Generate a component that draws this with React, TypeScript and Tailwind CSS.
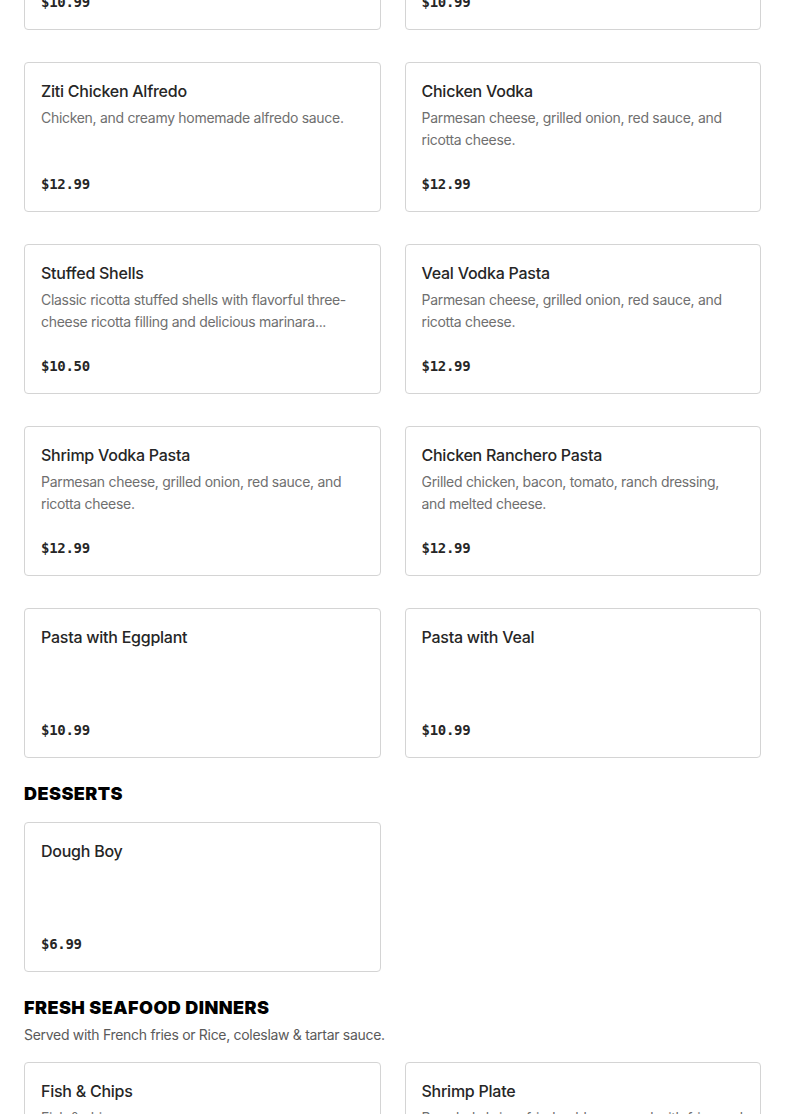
import React from "react";

type Item = { name: string; desc?: string; price: string };

const sans = "font-['Inter','Noto_Sans',sans-serif]";

function Card({ item }: { item: Item }) {
  return (
    <div className="h-[150px] rounded-[4px] border border-[#d4d4d4] bg-white px-4 pt-4 pb-[17px] flex flex-col">
      <div className={`${sans} text-[16px] leading-6 font-medium text-[#262626] tracking-[-0.25px]`}>{item.name}</div>
      {item.desc ? (
        <div className={`${sans} mt-1 text-[14px] leading-[22px] text-[#6f6f6f] tracking-[-0.3px] line-clamp-2`}>
          {item.desc}
        </div>
      ) : null}
      <div className="mt-auto font-['DejaVu_Sans_Mono','Liberation_Mono',monospace] text-[14px] leading-5 font-bold text-[#262626] tracking-[-0.3px]">
        {item.price}
      </div>
    </div>
  );
}

function Grid({ items }: { items: Item[] }) {
  return (
    <div className="grid grid-cols-2 gap-x-6 gap-y-8">
      {items.map((it, i) => (
        <Card key={i} item={it} />
      ))}
    </div>
  );
}

const pasta: Item[] = [
  { name: "Baked Ziti", desc: "Ziti pasta baked with marinara sauce and mozzarella cheese.", price: "$10.99" },
  { name: "Pasta with Meatballs", desc: "Homemade meatballs with marinara sauce.", price: "$10.99" },
  { name: "Ziti Chicken Alfredo", desc: "Chicken, and creamy homemade alfredo sauce.", price: "$12.99" },
  { name: "Chicken Vodka", desc: "Parmesan cheese, grilled onion, red sauce, and ricotta cheese.", price: "$12.99" },
  {
    name: "Stuffed Shells",
    desc: "Classic ricotta stuffed shells with flavorful three-cheese ricotta filling and delicious marinara...",
    price: "$10.50",
  },
  { name: "Veal Vodka Pasta", desc: "Parmesan cheese, grilled onion, red sauce, and ricotta cheese.", price: "$12.99" },
  { name: "Shrimp Vodka Pasta", desc: "Parmesan cheese, grilled onion, red sauce, and ricotta cheese.", price: "$12.99" },
  { name: "Chicken Ranchero Pasta", desc: "Grilled chicken, bacon, tomato, ranch dressing, and melted cheese.", price: "$12.99" },
  { name: "Pasta with Eggplant", price: "$10.99" },
  { name: "Pasta with Veal", price: "$10.99" },
];

const desserts: Item[] = [{ name: "Dough Boy", price: "$6.99" }];

const seafood: Item[] = [
  { name: "Fish & Chips", desc: "Fish & chips.", price: "$12.99" },
  { name: "Shrimp Plate", desc: "Breaded shrimp fried golden, served with fries and coleslaw.", price: "$13.99" },
];

function Heading({ children }: { children: React.ReactNode }) {
  return (
    <h2 className={`${sans} text-[18px] leading-6 font-black text-black uppercase tracking-[0.45px]`}>{children}</h2>
  );
}

export default function App() {
  return (
    <div className="h-[1114px] overflow-hidden bg-white">
      <div className="px-6 -mt-[120px]">
        <Grid items={pasta} />
        <div className="mt-6">
          <Heading>Desserts</Heading>
          <div className="mt-4">
            <Grid items={desserts} />
          </div>
        </div>
        <div className="mt-6">
          <Heading>Fresh Seafood Dinners</Heading>
          <p className={`${sans} mt-[5px] text-[14px] leading-5 text-[#5a5a5a] tracking-[-0.3px]`}>
            Served with French fries or Rice, coleslaw &amp; tartar sauce.
          </p>
          <div className="mt-[17px]">
            <Grid items={seafood} />
          </div>
        </div>
      </div>
    </div>
  );
}
